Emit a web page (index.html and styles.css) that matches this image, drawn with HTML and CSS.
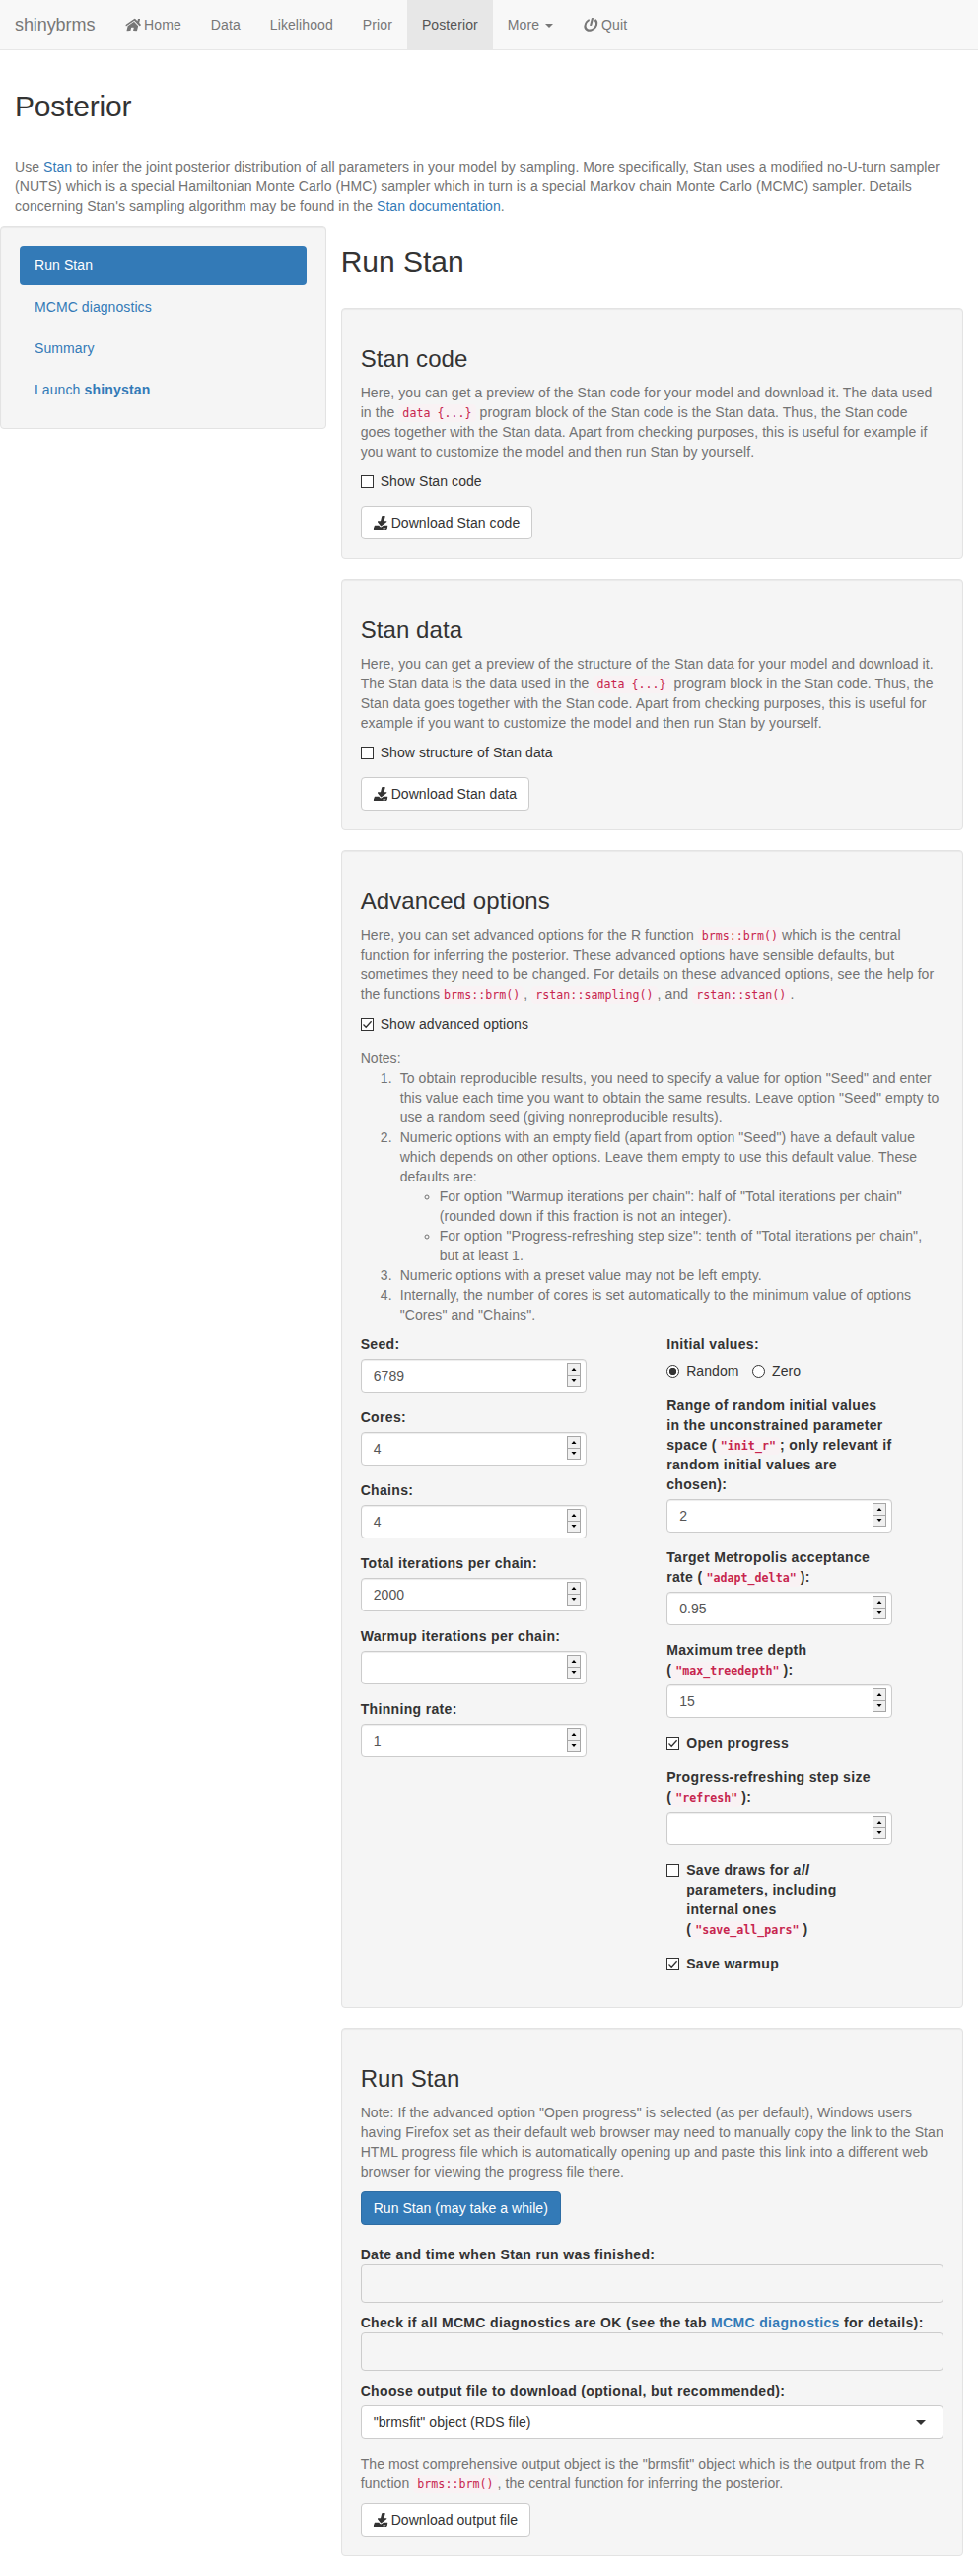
FILE: index.html
```html
<!DOCTYPE html>
<html lang="en">
<head>
<meta charset="utf-8">
<title>shinybrms</title>
<link rel="stylesheet" href="styles.css">
</head>
<body>
<svg class="sprite" aria-hidden="true">
  <symbol id="home" viewBox="0 0 576 512"><path d="M280.37 148.26L96 300.11V464a16 16 0 0 0 16 16l112.06-.29a16 16 0 0 0 15.92-16V368a16 16 0 0 1 16-16h64a16 16 0 0 1 16 16v95.64a16 16 0 0 0 16 16.05L464 480a16 16 0 0 0 16-16V300L295.67 148.26a12.19 12.19 0 0 0-15.3 0zM571.6 251.47L488 182.56V44.05a12 12 0 0 0-12-12h-56a12 12 0 0 0-12 12v72.61L318.47 43a48 48 0 0 0-61 0L4.34 251.47a12 12 0 0 0-1.6 16.9l25.5 31A12 12 0 0 0 45.15 301l235.22-193.74a12.19 12.19 0 0 1 15.3 0L530.9 301a12 12 0 0 0 16.9-1.6l25.5-31a12 12 0 0 0-1.7-16.93z"/></symbol>
  <symbol id="power" viewBox="0 0 512 512"><path d="M400 54.1c63 45 104 118.6 104 201.9 0 136.8-110.8 247.7-247.5 248C120 504.3 8.2 393 8 256.4 7.9 173.1 48.9 99.3 111.8 54.2c11.7-8.3 28-4.8 35 7.7L162.6 90c5.9 10.5 3.1 23.8-6.6 31-41.5 30.8-68 79.6-68 134.9-.1 92.3 74.5 168.1 168 168.1 91.6 0 168.6-74.2 168-169.1-.3-51.8-24.7-101.8-68.1-134-9.7-7.2-12.4-20.5-6.5-30.9l15.8-28.1c7-12.4 23.2-16.1 34.8-7.8zM296 264V24c0-13.3-10.7-24-24-24h-32c-13.3 0-24 10.7-24 24v240c0 13.3 10.7 24 24 24h32c13.3 0 24-10.7 24-24z"/></symbol>
  <symbol id="download" viewBox="0 0 512 512"><path d="M216 0h80c13.3 0 24 10.7 24 24v168h87.7c17.8 0 26.7 21.5 14.1 34.1L269.7 378.3c-7.5 7.5-19.8 7.5-27.3 0L90.1 226.1c-12.6-12.6-3.7-34.1 14.1-34.1H192V24c0-13.3 10.7-24 24-24zm296 376v112c0 13.3-10.7 24-24 24H24c-13.3 0-24-10.7-24-24V376c0-13.3 10.7-24 24-24h146.7l49 49c20.1 20.1 52.5 20.1 72.6 0l49-49H488c13.3 0 24 10.7 24 24zm-124 88c0-11-9-20-20-20s-20 9-20 20 9 20 20 20 20-9 20-20zm64 0c0-11-9-20-20-20s-20 9-20 20 9 20 20 20 20-9 20-20z"/></symbol>
  <symbol id="check" viewBox="0 0 11 11"><path d="M1.5 5.5L4.2 8.2L9.6 2.2" fill="none" stroke="#333" stroke-width="1.3"/></symbol>
  <symbol id="spin" viewBox="0 0 14 24"><rect x=".5" y=".5" width="13" height="23" fill="#f0f0f0" stroke="#a6a6a6"/><path d="M1 12.5h12" stroke="#a6a6a6"/><path d="M4.5 8L7 5L9.5 8zM4.5 16L7 19L9.5 16z" fill="#000"/></symbol>
</svg>

<nav class="navbar">
  <span class="brand">shinybrms</span>
  <a class="nav-link"><svg class="icon icon-home"><use href="#home"/></svg> Home</a>
  <a class="nav-link">Data</a>
  <a class="nav-link">Likelihood</a>
  <a class="nav-link">Prior</a>
  <a class="nav-link active">Posterior</a>
  <a class="nav-link">More <span class="caret"></span></a>
  <a class="nav-link"><svg class="icon icon-quit"><use href="#power"/></svg> Quit</a>
</nav>

<header class="intro">
  <h2>Posterior</h2>
  <p class="help">Use <a>Stan</a> to infer the joint posterior distribution of all parameters in your model by sampling. More specifically, Stan uses a modified no-U-turn sampler (NUTS) which is a special Hamiltonian Monte Carlo (HMC) sampler which in turn is a special Markov chain Monte Carlo (MCMC) sampler. Details concerning Stan's sampling algorithm may be found in the <a>Stan documentation</a>.</p>
</header>

<div class="layout">
  <aside class="well sidebar">
    <a class="pill active">Run Stan</a>
    <a class="pill">MCMC diagnostics</a>
    <a class="pill">Summary</a>
    <a class="pill">Launch <b>shinystan</b></a>
  </aside>

  <main class="main">
    <h2>Run Stan</h2>

    <section class="well">
      <h3>Stan code</h3>
      <p class="help">Here, you can get a preview of the Stan code for your model and download it. The data used<br>in the <code>data {...}</code> program block of the Stan code is the Stan data. Thus, the Stan code<br>goes together with the Stan data. Apart from checking purposes, this is useful for example if<br>you want to customize the model and then run Stan by yourself.</p>
      <label class="check"><span class="box"></span><span>Show Stan code</span></label>
      <a class="btn"><svg class="icon"><use href="#download"/></svg> Download Stan code</a>
    </section>

    <section class="well">
      <h3>Stan data</h3>
      <p class="help">Here, you can get a preview of the structure of the Stan data for your model and download it.<br>The Stan data is the data used in the <code>data {...}</code> program block in the Stan code. Thus, the<br>Stan data goes together with the Stan code. Apart from checking purposes, this is useful for<br>example if you want to customize the model and then run Stan by yourself.</p>
      <label class="check"><span class="box"></span><span>Show structure of Stan data</span></label>
      <a class="btn"><svg class="icon"><use href="#download"/></svg> Download Stan data</a>
    </section>

    <section class="well">
      <h3>Advanced options</h3>
      <p class="help">Here, you can set advanced options for the R function <code>brms::brm()</code>which is the central<br>function for inferring the posterior. These advanced options have sensible defaults, but<br>sometimes they need to be changed. For details on these advanced options, see the help for<br>the functions<code>brms::brm()</code>, <code>rstan::sampling()</code>, and <code>rstan::stan()</code>.</p>
      <label class="check"><span class="box"><svg class="tick"><use href="#check"/></svg></span><span>Show advanced options</span></label>
      <div class="help">
        Notes:
        <ol>
          <li>To obtain reproducible results, you need to specify a value for option "Seed" and enter<br>this value each time you want to obtain the same results. Leave option "Seed" empty to<br>use a random seed (giving nonreproducible results).</li>
          <li>Numeric options with an empty field (apart from option "Seed") have a default value<br>which depends on other options. Leave them empty to use this default value. These<br>defaults are:
            <ul>
              <li>For option "Warmup iterations per chain": half of "Total iterations per chain"<br>(rounded down if this fraction is not an integer).</li>
              <li>For option "Progress-refreshing step size": tenth of "Total iterations per chain",<br>but at least 1.</li>
            </ul>
          </li>
          <li>Numeric options with a preset value may not be left empty.</li>
          <li>Internally, the number of cores is set automatically to the minimum value of options<br>"Cores" and "Chains".</li>
        </ol>
      </div>

      <div class="options">
        <div class="column">
          <div class="group"><label class="title">Seed:</label><div class="number"><span>6789</span><svg class="spinner"><use href="#spin"/></svg></div></div>
          <div class="group"><label class="title">Cores:</label><div class="number"><span>4</span><svg class="spinner"><use href="#spin"/></svg></div></div>
          <div class="group"><label class="title">Chains:</label><div class="number"><span>4</span><svg class="spinner"><use href="#spin"/></svg></div></div>
          <div class="group"><label class="title">Total iterations per chain:</label><div class="number"><span>2000</span><svg class="spinner"><use href="#spin"/></svg></div></div>
          <div class="group"><label class="title">Warmup iterations per chain:</label><div class="number"><span></span><svg class="spinner"><use href="#spin"/></svg></div></div>
          <div class="group"><label class="title">Thinning rate:</label><div class="number"><span>1</span><svg class="spinner"><use href="#spin"/></svg></div></div>
        </div>
        <div class="column">
          <div class="group">
            <label class="title">Initial values:</label>
            <div class="radios">
              <label class="radio"><span class="dot on"></span>Random</label>
              <label class="radio"><span class="dot"></span>Zero</label>
            </div>
          </div>
          <div class="group"><label class="title">Range of random initial values<br>in the unconstrained parameter<br>space (<code>"init_r"</code>; only relevant if<br>random initial values are<br>chosen):</label><div class="number"><span>2</span><svg class="spinner"><use href="#spin"/></svg></div></div>
          <div class="group"><label class="title">Target Metropolis acceptance<br>rate (<code>"adapt_delta"</code>):</label><div class="number"><span>0.95</span><svg class="spinner"><use href="#spin"/></svg></div></div>
          <div class="group"><label class="title">Maximum tree depth<br>(<code>"max_treedepth"</code>):</label><div class="number"><span>15</span><svg class="spinner"><use href="#spin"/></svg></div></div>
          <label class="check bold"><span class="box"><svg class="tick"><use href="#check"/></svg></span><span>Open progress</span></label>
          <div class="group"><label class="title">Progress-refreshing step size<br>(<code>"refresh"</code>):</label><div class="number"><span></span><svg class="spinner"><use href="#spin"/></svg></div></div>
          <label class="check bold"><span class="box"></span><span>Save draws for <i>all</i><br>parameters, including<br>internal ones<br>(<code>"save_all_pars"</code>)</span></label>
          <label class="check bold"><span class="box"><svg class="tick"><use href="#check"/></svg></span><span>Save warmup</span></label>
        </div>
      </div>
    </section>

    <section class="well">
      <h3>Run Stan</h3>
      <p class="help">Note: If the advanced option "Open progress" is selected (as per default), Windows users<br>having Firefox set as their default web browser may need to manually copy the link to the Stan<br>HTML progress file which is automatically opening up and paste this link into a different web<br>browser for viewing the progress file there.</p>
      <a class="btn primary">Run Stan (may take a while)</a>
      <div class="output"><b>Date and time when Stan run was finished:</b><div class="pre"></div></div>
      <div class="output"><b>Check if all MCMC diagnostics are OK (see the tab <a>MCMC diagnostics</a> for details):</b><div class="pre"></div></div>
      <div class="group"><label class="title">Choose output file to download (optional, but recommended):</label><div class="select"><span>"brmsfit" object (RDS file)</span><span class="arrow"></span></div></div>
      <p class="help">The most comprehensive output object is the "brmsfit" object which is the output from the R<br>function <code>brms::brm()</code>, the central function for inferring the posterior.</p>
      <a class="btn"><svg class="icon"><use href="#download"/></svg> Download output file</a>
    </section>
  </main>
</div>
</body>
</html>
```
FILE: styles.css
```css
* { box-sizing: border-box; }
body {
  margin: 0;
  background: #fff;
  color: #333;
  font: 14px/20px "Liberation Sans", Arial, sans-serif;
  letter-spacing: .08px;
}
a { color: #337ab7; text-decoration: none; }
b { letter-spacing: .34px; }
h2, h3 { font-weight: 400; }
h2 { margin: 20px 0 10px; font-size: 30px; line-height: 33px; letter-spacing: 0; }
h3 { margin: 19px 0 11px; font-size: 24px; line-height: 26px; }
.sprite { display: none; }
.icon {
  width: 14px;
  height: 14px;
  fill: currentColor;
  vertical-align: -2px;
  overflow: visible;
  transform: skewX(-14deg);
  transform-origin: 0 88%;
}
.icon-home { width: 15.75px; }
.icon-quit { margin-right: 1px; }

.navbar {
  display: flex;
  height: 51px;
  background: #f8f8f8;
  border-bottom: 1px solid #e7e7e7;
}
.brand { padding: 15px; font-size: 18px; letter-spacing: -.08px; color: #777; }
.nav-link { padding: 15px; color: #777; white-space: nowrap; letter-spacing: .1px; }
.nav-link.active { background: #e7e7e7; color: #555; }
.caret {
  display: inline-block;
  margin-left: 2px;
  vertical-align: middle;
  border-top: 4px solid;
  border-left: 4px solid transparent;
  border-right: 4px solid transparent;
}

.intro { padding: 20px 15px 10px; }
.intro h2 { margin-bottom: 35px; letter-spacing: -.2px; }
.help { margin: 0 0 10px; color: #737373; }
.intro .help { margin: 0; letter-spacing: .07px; }

.layout { display: flex; align-items: flex-start; }
.well {
  padding: 19px;
  margin-bottom: 20px;
  background: #f5f5f5;
  border: 1px solid #e3e3e3;
  border-radius: 4px;
  box-shadow: inset 0 1px 1px rgba(0, 0, 0, .05);
}
.main .well { padding-top: 20px; }
.well .help { white-space: nowrap; }
.main .well h3 { margin-bottom: 10px; }
.sidebar {
  flex: 0 0 33.3333%;
  display: flex;
  flex-direction: column;
  gap: 2px;
}
.pill { padding: 10px 15px; border-radius: 4px; }
.pill.active { background: #337ab7; color: #fff; }
.pill b { letter-spacing: .2px; }
.main { flex: 1; min-width: 0; padding: 0 15px; }
.main > h2 { margin-bottom: 30px; }
.main .well h3 { margin-top: 18px; margin-bottom: 11px; }

code {
  padding: 2px 4px;
  font: 11.62px/1 "DejaVu Sans Mono", monospace;
  letter-spacing: .03px;
  color: #c7254e;
  background: #f9f2f4;
  border-radius: 4px;
}
.title code, .bold code { font-weight: 700; }

.check { display: flex; gap: 7px; margin-bottom: 15px; }
.bold { font-weight: 700; letter-spacing: .33px; }
.box {
  flex: none;
  display: flex;
  width: 13px;
  height: 13px;
  margin-top: 4px;
  background: #fff;
  border: 1px solid #333;
}
.tick { width: 11px; height: 11px; }

.btn {
  display: inline-block;
  vertical-align: top;
  padding: 6px 12px;
  border: 1px solid #ccc;
  border-radius: 4px;
  background: #fff;
  color: #333;
}
.btn.primary {
  margin-bottom: 20px;
  background: #337ab7;
  border-color: #2e6da4;
  color: #fff;
  letter-spacing: .05px;
}

ol, ul { margin: 0; padding-left: 40px; }
ol > li::marker { content: counter(list-item) ".\00a0\00a0"; }
ul > li::marker { content: normal; }

.options { display: grid; grid-template-columns: 229px 229px; column-gap: 81.5px; }
.group { margin-bottom: 15px; }
.title {
  display: block;
  margin-bottom: 5px;
  font-weight: 700;
  letter-spacing: .34px;
  white-space: nowrap;
}
.number, .select {
  display: flex;
  align-items: center;
  justify-content: space-between;
  height: 34px;
  padding: 0 5px 0 12px;
  background: #fff;
  border: 1px solid #ccc;
  border-radius: 4px;
  color: #555;
}
.number { box-shadow: inset 0 1px 1px rgba(0, 0, 0, .075); }
.spinner { width: 14px; height: 24px; margin-bottom: 2px; }
.radios { display: flex; gap: 13.5px; height: 22px; padding-top: 2px; }
.radio { display: flex; gap: 7px; }
.dot {
  width: 13px;
  height: 13px;
  margin-top: 4px;
  border: 1px solid #333;
  border-radius: 50%;
  background: #fff;
}
.dot.on { background: radial-gradient(circle, #333 3.4px, #fff 4px); }

.output { margin-bottom: 10px; }
.pre { height: 39px; border: 1px solid #ccc; border-radius: 4px; }
.select { padding-right: 17px; color: #333; }
.arrow {
  border-top: 5px solid #333;
  border-left: 5px solid transparent;
  border-right: 5px solid transparent;
}
```
